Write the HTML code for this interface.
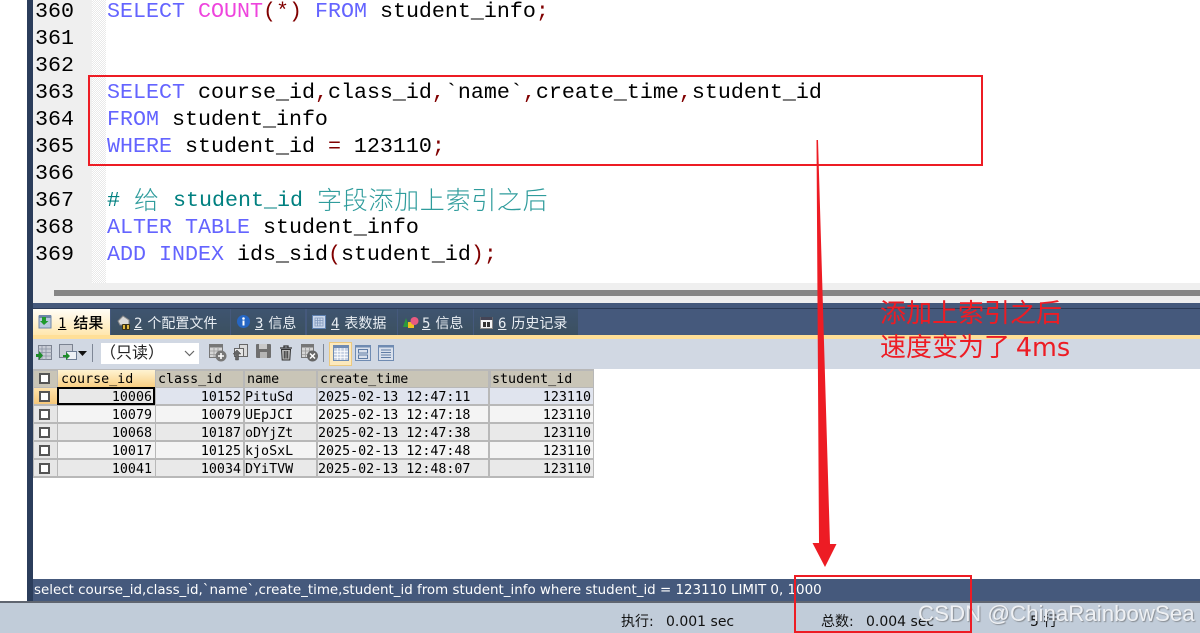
<!DOCTYPE html>
<html lang="zh"><head><meta charset="utf-8"><title>SQL</title>
<style>
html,body{margin:0;padding:0;background:#fff}
#p{position:relative;width:1200px;height:633px;overflow:hidden;background:#fff;font-family:"Liberation Sans","Noto Sans CJK SC",sans-serif}
#p div,#p svg{position:absolute}
.l{font:21.67px/27px "Liberation Mono",monospace;white-space:pre;color:#000;left:107px;height:27px}
.n{font:21.67px/27px "Liberation Mono",monospace;color:#000;left:35px;height:27px}
.k{color:#6464ff}.f{color:#ee44dd}.r{color:#800000}
.cjk{font-family:"Noto Sans CJK SC",sans-serif;font-size:25px;font-weight:300;color:#2f9c9c;line-height:27px}
.tab{top:309px;height:26px;background:linear-gradient(#3e5470,#3c5060);font-size:14px;line-height:28px;color:#e8edf2;white-space:pre}
.tab u{font-family:"DejaVu Sans Mono",monospace;font-size:14px}
.c{height:18px;font:13.33px/18px "DejaVu Sans Mono",monospace;color:#000;white-space:pre;overflow:hidden;box-sizing:border-box;padding:0 2px}
.ra{text-align:right}
.g{background:#b8b8b8}
.chk{left:39px;width:11px;height:11px;border:2px solid #555;box-sizing:border-box;background:#fff}
.gh{left:34px;width:23px;height:16px;background:#e6e6e6}
.ic{overflow:visible}
.st{top:613px;height:18px;font:14px/18px "DejaVu Sans","Noto Sans CJK SC",sans-serif;color:#111;white-space:pre}
</style></head><body><div id="p">

<div style="left:27px;top:0;width:6px;height:602px;background:#2b3d5b"></div>
<div style="left:33px;top:0;width:59px;height:283px;background:#efefef"></div>
<div style="left:92px;top:0;width:14px;height:283px;background:repeating-conic-gradient(#e9e9e9 0 25%,#fff 0 50%) 0 0/2px 2px"></div>

<div class="n" style="top:-2px">360</div>
<div class="n" style="top:25px">361</div>
<div class="n" style="top:52px">362</div>
<div class="n" style="top:79px">363</div>
<div class="n" style="top:106px">364</div>
<div class="n" style="top:133px">365</div>
<div class="n" style="top:160px">366</div>
<div class="n" style="top:187px">367</div>
<div class="n" style="top:214px">368</div>
<div class="n" style="top:241px">369</div>

<div class="l" style="top:-2px"><span class="k">SELECT</span> <span class="f">COUNT</span><span class="r">(*)</span> <span class="k">FROM</span> student_info<span class="r">;</span></div>
<div class="l" style="top:79px"><span class="k">SELECT</span> course_id<span class="r">,</span>class_id<span class="r">,</span>`name`<span class="r">,</span>create_time<span class="r">,</span>student_id</div>
<div class="l" style="top:106px"><span class="k">FROM</span> student_info</div>
<div class="l" style="top:133px"><span class="k">WHERE</span> student_id <span class="r">=</span> 123110<span class="r">;</span></div>
<div class="l" style="top:187px;color:#008080;left:107px">#</div>
<div class="cjk" style="left:134px;top:186px;white-space:pre">给</div>
<div class="l" style="top:187px;color:#008080;left:173px">student_id</div>
<div class="cjk" style="left:317px;top:186px;white-space:pre;letter-spacing:.7px">字段添加上索引之后</div>
<div class="l" style="top:214px"><span class="k">ALTER TABLE</span> student_info</div>
<div class="l" style="top:241px"><span class="k">ADD INDEX</span> ids_sid<span class="r">(</span>student_id<span class="r">);</span></div>

<div style="left:33px;top:283px;width:1167px;height:20px;background:#efefef"></div>
<div style="left:54px;top:290px;width:1146px;height:6px;background:#868686"></div>

<div style="left:33px;top:303px;width:1167px;height:32px;background:#45597c"></div>
<div style="left:33px;top:308px;width:1167px;height:1px;background:#2c3b57"></div>
<div style="left:33px;top:335px;width:1167px;height:4px;background:#ffdf97"></div>
<div style="left:33px;top:339px;width:1167px;height:30px;background:#d1d8e3"></div>

<div class="tab" style="left:33px;width:77px;background:linear-gradient(#fffdf6,#ffe7ae);color:#000"><span style="position:absolute;left:25px;top:0;word-spacing:3px"><u>1</u> <b style="font-weight:500;font-size:15px">结果</b></span></div>
<div class="tab" style="left:111px;width:119px"><span style="position:absolute;left:23px;top:0;word-spacing:1px"><u>2</u> 个配置文件</span></div>
<div class="tab" style="left:231px;width:74px"><span style="position:absolute;left:24px;top:0;word-spacing:1px"><u>3</u> 信息</span></div>
<div class="tab" style="left:307px;width:90px"><span style="position:absolute;left:24px;top:0;word-spacing:1px"><u>4</u> 表数据</span></div>
<div class="tab" style="left:398px;width:75px"><span style="position:absolute;left:24px;top:0;word-spacing:1px"><u>5</u> 信息</span></div>
<div class="tab" style="left:474px;width:104px"><span style="position:absolute;left:24px;top:0;word-spacing:1px"><u>6</u> 历史记录</span></div>

<!-- tab icons -->
<svg class="ic" style="left:38px;top:314px" width="14" height="16"><rect x="1" y="2" width="12" height="12" fill="#b9c8de" stroke="#6d86a8"/><rect x="1" y="1" width="12" height="3" fill="#6d86a8"/><path d="M4 3h4v4h2.500L6 11 2 7h2z" fill="#1f9a2c"/></svg>
<svg class="ic" style="left:117px;top:315px" width="14" height="16"><path d="M1 6 6 1l6 4v5H3z" fill="#d8d8d8" stroke="#888"/><rect x="5" y="9" width="8" height="6" rx="1" fill="#3a3218"/><rect x="6" y="10" width="2" height="4" fill="#e0b840"/><rect x="10" y="10" width="2" height="4" fill="#e0b840"/></svg>
<svg class="ic" style="left:237px;top:315px" width="13" height="13"><circle cx="6.500" cy="6.500" r="6.500" fill="#2566c4"/><circle cx="6.500" cy="3.500" r="1.300" fill="#fff"/><rect x="5.500" y="5.500" width="2" height="5" fill="#fff"/></svg>
<svg class="ic" style="left:312px;top:315px" width="14" height="14"><rect x=".5" y=".5" width="13" height="13" fill="#c9d6ea" stroke="#5d7fae"/><path d="M3 3h8v8H3zM3 5.500h8M3 8h8M5.500 3v8M8 3v8" fill="none" stroke="#7d96bb" stroke-width=".8"/></svg>
<svg class="ic" style="left:403px;top:316px" width="16" height="13"><path d="M0 11 3 2l3 9z" fill="#2c9a3c"/><rect x="5" y="6" width="6" height="6" fill="#f0c020"/><circle cx="11.500" cy="5" r="4" fill="#e85a80"/></svg>
<svg class="ic" style="left:480px;top:316px" width="13" height="13"><rect x=".5" y="1.500" width="12" height="11" fill="#f4f4f4" stroke="#888"/><rect x=".5" y="1" width="12" height="3" fill="#445"/><rect x="3" y="6" width="3" height="5" fill="#333"/><rect x="7" y="6" width="3" height="5" fill="#333"/></svg>

<!-- toolbar icons -->
<svg class="ic" style="left:36px;top:344px" width="17" height="17"><rect x="2.500" y="1.500" width="13" height="14" fill="#c9cdd6" stroke="#7c8391"/><path d="M2 5h14M2 8.500h14M2 12h14M6 2v14M10 2v14" stroke="#8992a3" stroke-width=".8"/><path d="M0 10h3V7l4 4.500L3 16v-3H0z" fill="#1d8c2a"/></svg>
<svg class="ic" style="left:59px;top:344px" width="19" height="17"><rect x=".5" y=".5" width="13" height="13" fill="#c9cdd6" stroke="#7c8391"/><rect x="7.500" y="7.500" width="10" height="8" fill="#eef1f6" stroke="#6f7e96"/><path d="M4 11h3V8l4 4-4 4v-3H4z" fill="#1d8c2a"/></svg>
<svg class="ic" style="left:78px;top:351px" width="9" height="5"><path d="M0 0h9L4.500 5z" fill="#111"/></svg>
<div style="left:92px;top:344px;width:1px;height:18px;background:#7e8796"></div>
<div style="left:101px;top:343px;width:98px;height:21px;background:#fff;font-size:16px;line-height:21px;white-space:pre;color:#222"><span style="position:absolute;left:-1px;top:0">（只读）</span></div>
<svg class="ic" style="left:184px;top:350px" width="11" height="7"><path d="M1 1l4.500 4.500L10 1" fill="none" stroke="#666" stroke-width="1.200"/></svg>
<svg class="ic" style="left:209px;top:344px" width="18" height="18"><rect x=".5" y=".5" width="13" height="13" fill="#d6d6d6" stroke="#777"/><rect x=".5" y=".5" width="13" height="3" fill="#777"/><path d="M1 7h12M1 10.500h12M5 4v9M9 4v9" stroke="#999" stroke-width=".8"/><circle cx="12" cy="12" r="5.500" fill="#777"/><path d="M12 9v6M9 12h6" stroke="#fff" stroke-width="1.600"/></svg>
<svg class="ic" style="left:232px;top:344px" width="17" height="18"><rect x="7.500" y=".5" width="8" height="12" fill="#dadada" stroke="#666"/><rect x="2.500" y="4.500" width="9" height="8" fill="#e6e6e6" stroke="#666"/><path d="M6.500 16V10H9L5 6 1 10h2.500v6z" fill="#666" stroke="#444" stroke-width=".5"/></svg>
<svg class="ic" style="left:256px;top:344px" width="15" height="14"><rect width="15" height="14" rx="1" fill="#6f6f6f"/><rect x="3" y="0" width="8" height="5" fill="#c9c9c9"/><rect x="4" y="8" width="7" height="6" fill="#b5b5b5"/></svg>
<svg class="ic" style="left:279px;top:345px" width="14" height="16"><path d="M1 3h12M5 2.500V1h4v1.500" fill="none" stroke="#333" stroke-width="1.300"/><path d="M2.500 4.500h9l-.7 10.500H3.200z" fill="#bbb" stroke="#333"/><path d="M5.300 6v7.500M7 6v7.500M8.700 6v7.500" stroke="#333"/></svg>
<svg class="ic" style="left:301px;top:344px" width="18" height="18"><rect x=".5" y=".5" width="12" height="13" fill="#d6d6d6" stroke="#777"/><rect x=".5" y=".5" width="12" height="3" fill="#777"/><path d="M1 7h11M1 10.500h11M4.500 4v9M8.500 4v9" stroke="#999" stroke-width=".8"/><circle cx="11.500" cy="12" r="5.500" fill="#666"/><path d="M9 9.500l5 5M14 9.500l-5 5" stroke="#fff" stroke-width="1.500"/></svg>
<div style="left:323px;top:344px;width:1px;height:18px;background:#7e8796"></div>
<div style="left:329px;top:342px;width:23px;height:24px;background:#fce9bd;border:1px solid #ecc97f;box-sizing:border-box"></div>
<svg class="ic" style="left:333px;top:345px" width="16" height="16"><rect x=".5" y=".5" width="15" height="15" fill="#c5d0e2" stroke="#6f8bb2"/><rect x=".5" y=".5" width="15" height="2.500" fill="#6f8bb2"/><path d="M1 6.300h14M1 9.300h14M1 12.300h14M4.300 3v12M7.800 3v12M11.300 3v12" stroke="#fff" stroke-width=".8"/></svg>
<svg class="ic" style="left:355px;top:345px" width="16" height="16"><rect x=".5" y=".5" width="15" height="15" fill="#d9e0ec" stroke="#6f8bb2"/><rect x=".5" y=".5" width="15" height="2" fill="#6f8bb2"/><rect x="3.500" y="4.500" width="9" height="3.500" fill="none" stroke="#5f7ca5"/><rect x="3.500" y="10" width="9" height="3.500" fill="none" stroke="#5f7ca5"/></svg>
<svg class="ic" style="left:378px;top:345px" width="16" height="16"><rect x=".5" y=".5" width="15" height="15" fill="#d9e0ec" stroke="#6f8bb2"/><rect x=".5" y=".5" width="15" height="2" fill="#6f8bb2"/><path d="M3 5h10M3 7.500h10M3 10h10M3 12.500h10" stroke="#5f7ca5"/></svg>

<!-- results grid -->
<div class="g" style="left:33px;top:369px;width:561px;height:108.500px"></div>

<div style="left:34px;top:371px;width:23px;height:16px;background:#c9c5b7"></div>
<div style="left:58px;top:370px;width:97px;height:17px;background:linear-gradient(#fff3d2,#f9cf82)"></div>
<div style="left:156px;top:371px;width:87px;height:16px;background:#c9c5b7"></div>
<div style="left:245px;top:371px;width:71px;height:16px;background:#c9c5b7"></div>
<div style="left:318px;top:371px;width:170px;height:16px;background:#c9c5b7"></div>
<div style="left:491px;top:371px;width:102px;height:16px;background:#c9c5b7"></div>
<div class="c" style="left:59px;top:371px;width:96px">course_id</div>
<div class="c" style="left:156px;top:371px;width:87px">class_id</div>
<div class="c" style="left:245px;top:371px;width:71px">name</div>
<div class="c" style="left:318px;top:371px;width:170px">create_time</div>
<div class="c" style="left:490px;top:371px;width:103px">student_id</div>
<div class="chk" style="top:373px"></div>

<!-- row 1 -->
<div style="left:34px;top:388px;width:23px;height:16px;background:linear-gradient(#ffe3ab,#f6c87a)"></div>
<div style="left:58px;top:388px;width:97px;height:16px;background:#e8e8e8"></div>
<div style="left:156px;top:388px;width:87px;height:16px;background:#e0e4ee"></div>
<div style="left:245px;top:388px;width:71px;height:16px;background:#e0e4ee"></div>
<div style="left:318px;top:388px;width:170px;height:16px;background:#e0e4ee"></div>
<div style="left:490px;top:388px;width:103px;height:16px;background:#e0e4ee"></div>
<div style="left:57px;top:387px;width:98px;height:18px;border:2px solid #000;box-sizing:border-box"></div>
<!-- row 2 -->
<div class="gh" style="top:406px"></div>
<div style="left:58px;top:406px;width:97px;height:16px;background:#f4f4f4"></div>
<div style="left:156px;top:406px;width:87px;height:16px;background:#f4f4f4"></div>
<div style="left:245px;top:406px;width:71px;height:16px;background:#f4f4f4"></div>
<div style="left:318px;top:406px;width:170px;height:16px;background:#f4f4f4"></div>
<div style="left:490px;top:406px;width:103px;height:16px;background:#f4f4f4"></div>
<!-- row 3 -->
<div class="gh" style="top:424px"></div>
<div style="left:58px;top:424px;width:97px;height:16px;background:#e9e9e9"></div>
<div style="left:156px;top:424px;width:87px;height:16px;background:#e9e9e9"></div>
<div style="left:245px;top:424px;width:71px;height:16px;background:#e9e9e9"></div>
<div style="left:318px;top:424px;width:170px;height:16px;background:#e9e9e9"></div>
<div style="left:490px;top:424px;width:103px;height:16px;background:#e9e9e9"></div>
<!-- row 4 -->
<div class="gh" style="top:442px"></div>
<div style="left:58px;top:442px;width:97px;height:16px;background:#f4f4f4"></div>
<div style="left:156px;top:442px;width:87px;height:16px;background:#f4f4f4"></div>
<div style="left:245px;top:442px;width:71px;height:16px;background:#f4f4f4"></div>
<div style="left:318px;top:442px;width:170px;height:16px;background:#f4f4f4"></div>
<div style="left:490px;top:442px;width:103px;height:16px;background:#f4f4f4"></div>
<!-- row 5 -->
<div class="gh" style="top:460px"></div>
<div style="left:58px;top:460px;width:97px;height:16px;background:#e9e9e9"></div>
<div style="left:156px;top:460px;width:87px;height:16px;background:#e9e9e9"></div>
<div style="left:245px;top:460px;width:71px;height:16px;background:#e9e9e9"></div>
<div style="left:318px;top:460px;width:170px;height:16px;background:#e9e9e9"></div>
<div style="left:490px;top:460px;width:103px;height:16px;background:#e9e9e9"></div>

<div class="chk" style="top:391px"></div><div class="chk" style="top:409px"></div><div class="chk" style="top:427px"></div><div class="chk" style="top:445px"></div><div class="chk" style="top:463px"></div>

<div class="c ra" style="left:58px;top:389px;width:96px">10006</div><div class="c ra" style="left:156px;top:389px;width:87px">10152</div><div class="c" style="left:243px;top:389px;width:73px">PituSd</div><div class="c" style="left:316px;top:389px;width:172px">2025-02-13 12:47:11</div><div class="c ra" style="left:490px;top:389px;width:103px">123110</div>
<div class="c ra" style="left:58px;top:407px;width:96px">10079</div><div class="c ra" style="left:156px;top:407px;width:87px">10079</div><div class="c" style="left:243px;top:407px;width:73px">UEpJCI</div><div class="c" style="left:316px;top:407px;width:172px">2025-02-13 12:47:18</div><div class="c ra" style="left:490px;top:407px;width:103px">123110</div>
<div class="c ra" style="left:58px;top:425px;width:96px">10068</div><div class="c ra" style="left:156px;top:425px;width:87px">10187</div><div class="c" style="left:243px;top:425px;width:73px">oDYjZt</div><div class="c" style="left:316px;top:425px;width:172px">2025-02-13 12:47:38</div><div class="c ra" style="left:490px;top:425px;width:103px">123110</div>
<div class="c ra" style="left:58px;top:443px;width:96px">10017</div><div class="c ra" style="left:156px;top:443px;width:87px">10125</div><div class="c" style="left:243px;top:443px;width:73px">kjoSxL</div><div class="c" style="left:316px;top:443px;width:172px">2025-02-13 12:47:48</div><div class="c ra" style="left:490px;top:443px;width:103px">123110</div>
<div class="c ra" style="left:58px;top:461px;width:96px">10041</div><div class="c ra" style="left:156px;top:461px;width:87px">10034</div><div class="c" style="left:243px;top:461px;width:73px">DYiTVW</div><div class="c" style="left:316px;top:461px;width:172px">2025-02-13 12:48:07</div><div class="c ra" style="left:490px;top:461px;width:103px">123110</div>

<!-- status -->
<div style="left:33px;top:579px;width:1167px;height:22px;background:#45597c;color:#fff;font:13.43px/23px 'DejaVu Sans',sans-serif;white-space:pre;overflow:hidden"><span style="position:absolute;left:1px;top:0">select course_id,class_id,`name`,create_time,student_id from student_info where student_id = 123110 LIMIT 0, 1000</span></div>
<div style="left:0;top:601px;width:1200px;height:2px;background:#5f6570"></div>
<div style="left:0;top:603px;width:1200px;height:30px;background:#c1ccd9"></div>
<div class="st" style="left:621px">执行:</div><div class="st" style="left:666px">0.001 sec</div>
<div class="st" style="left:821px">总数:</div><div class="st" style="left:866px">0.004 sec</div>
<div class="st" style="left:1030px">5 行</div>

<div style="left:918px;top:599px;height:30px;font-size:22.300px;line-height:30px;color:#eef0f3;white-space:pre;text-shadow:1px 1px 1px rgba(90,90,90,.55)">CSDN @ChinaRainbowSea</div>

<!-- annotations -->
<div style="left:88px;top:75px;width:895px;height:91px;border:2px solid #ed1c24;box-sizing:border-box"></div>
<div style="left:794px;top:575px;width:178px;height:58px;border:2px solid #ed1c24;box-sizing:border-box"></div>
<svg style="left:0;top:0" width="1200" height="633"><path d="M816.500 140h1.500L830 544h6.500L825 567l-12.500-24h6.500z" fill="#ed1c24"/></svg>
<div style="left:880px;top:295px;height:34px;font:400 26px/34px 'Noto Sans CJK SC',sans-serif;color:#ed1c24;white-space:pre">添加上索引之后</div>
<div style="left:880px;top:329px;height:34px;font:400 26px/34px 'Noto Sans CJK SC',sans-serif;color:#ed1c24;white-space:pre">速度变为了 <span style="font-family:'DejaVu Sans',sans-serif;font-size:25.500px">4ms</span></div>
</div></body></html>
